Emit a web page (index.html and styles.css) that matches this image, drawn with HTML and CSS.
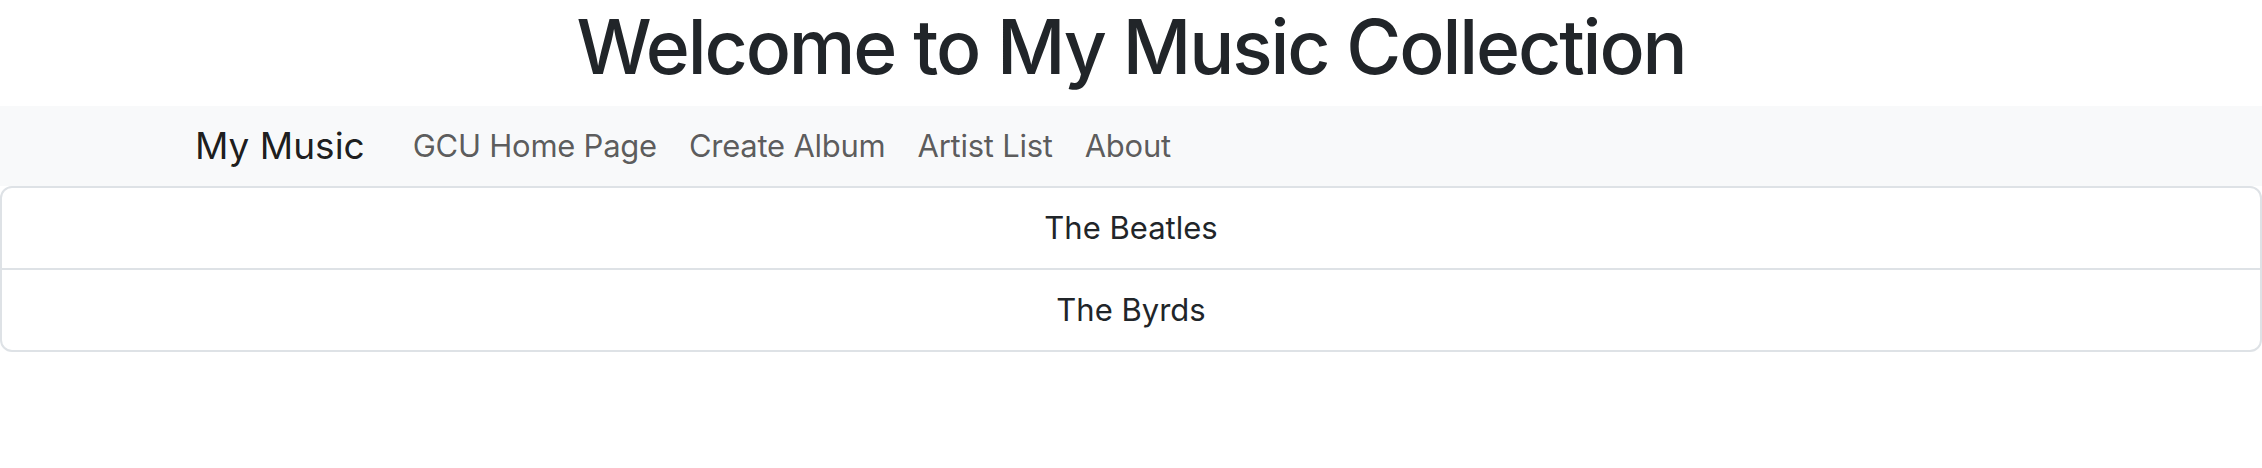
FILE: index.html
```html
<!DOCTYPE html>
<html lang="en">
<head>
<meta charset="utf-8">
<title>My Music</title>
<link rel="stylesheet" href="styles.css">
</head>
<body>
<h1 class="title">Welcome to My Music Collection</h1>
<nav class="navbar">
  <div class="nav-container">
    <a class="brand" href="#">My Music</a>
    <ul class="nav-links">
      <li><a class="nav-link" href="#">GCU Home Page</a></li>
      <li><a class="nav-link" href="#">Create Album</a></li>
      <li><a class="nav-link" href="#">Artist List</a></li>
      <li><a class="nav-link" href="#">About</a></li>
    </ul>
  </div>
</nav>
<ul class="list-group">
  <li class="list-item">The Beatles</li>
  <li class="list-item">The Byrds</li>
</ul>
</body>
</html>
```
FILE: styles.css
```css
* { box-sizing: border-box; }
body {
  margin: 0;
  font-family: Inter, "Noto Sans", sans-serif;
  color: #212529;
  background: #fff;
}
.title {
  margin: 0 0 16px;
  padding-top: 2px;
  height: 90px;
  font-size: 75px;
  font-weight: 500;
  letter-spacing: -2.1px;
  line-height: 90px;
  text-align: center;
  color: #212529;
}
.navbar {
  background: #f8f9fa;
  height: 80px;
  display: flex;
  align-items: center;
}
.nav-container {
  width: 1920px;
  margin: 0 auto;
  padding: 0 24px;
  display: flex;
  align-items: center;
}
.brand {
  font-size: 37px;
  color: rgba(0,0,0,0.9);
  text-decoration: none;
  margin-right: 32px;
  line-height: 60px;
}
.nav-links {
  list-style: none;
  margin: 0;
  padding: 0;
  display: flex;
}
.nav-link {
  display: block;
  padding: 0 16px;
  font-size: 31px;
  letter-spacing: -0.25px;
  line-height: 48px;
  color: rgba(0,0,0,0.65);
  text-decoration: none;
}
.list-group {
  list-style: none;
  margin: 0;
  padding: 0;
  border: 2px solid #dee2e6;
  border-radius: 12px;
}
.list-item {
  padding: 16px 32px;
  font-size: 31px;
  line-height: 48px;
  text-align: center;
  color: #212529;
}
.list-item + .list-item {
  border-top: 2px solid #dee2e6;
}
```
